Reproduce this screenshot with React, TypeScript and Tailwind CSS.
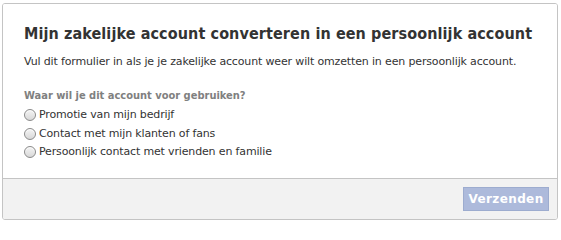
import React from 'react'

const options = [
  'Promotie van mijn bedrijf',
  'Contact met mijn klanten of fans',
  'Persoonlijk contact met vrienden en familie',
]

function Radio() {
  return (
    <span className="inline-block w-[12px] h-[12px] rounded-full border border-[#8a8a8a] bg-gradient-to-b from-[#f4f4f4] to-[#d8d8d8] shadow-[inset_0_1px_1px_rgba(255,255,255,0.9)] shrink-0" />
  )
}

export default function App() {
  return (
    <div className="w-[561px] h-[222px] bg-white pl-[2px] pt-[3px] font-['DejaVu_Sans',sans-serif] text-[#333333]">
      <div className="w-[556px] h-[217px] border border-[#c4c4c4] rounded-[3px] flex flex-col overflow-hidden">
        <div className="h-[174px] bg-white px-[21px] pt-[20px]">
          <h2 className="font-['DejaVu_Sans_Condensed',sans-serif] text-[16px] font-bold leading-[20px] tracking-[0.1px] whitespace-nowrap text-[#333333]">
            Mijn zakelijke account converteren in een persoonlijk account
          </h2>
          <p className="mt-[11px] text-[11px] leading-[14px] tracking-[-0.15px] whitespace-nowrap">
            Vul dit formulier in als je je zakelijke account weer wilt omzetten in een persoonlijk account.
          </p>
          <p className="mt-[20px] font-['DejaVu_Sans_Condensed',sans-serif] text-[11px] leading-[14px] font-bold text-[#808080]">
            Waar wil je dit account voor gebruiken?
          </p>
          <div className="mt-[3px] flex flex-col">
            {options.map((o) => (
              <label key={o} className="flex items-center gap-[3px] h-[18.5px] text-[11px] tracking-[-0.15px]">
                <Radio />
                <span>{o}</span>
              </label>
            ))}
          </div>
        </div>
        <div className="flex-1 bg-[#f2f2f2] border-t border-[#c4c4c4] flex items-start justify-end pt-[8px] pr-[8px]">
          <button className="w-[86px] h-[24px] bg-[#adbadb] border border-[#9daccf] text-white text-[12px] tracking-[0.4px] font-bold">
            Verzenden
          </button>
        </div>
      </div>
    </div>
  )
}
